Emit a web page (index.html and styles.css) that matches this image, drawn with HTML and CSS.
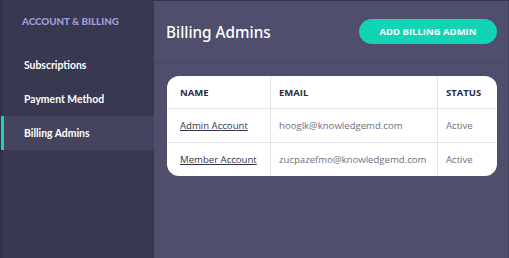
FILE: index.html
```html
<!DOCTYPE html>
<html lang="en">
<head>
  <meta charset="UTF-8" />
  <title>Billing Admins</title>
  <link rel="stylesheet" href="styles.css">
</head>
<body>

<div class="app">
  <aside class="sidebar">
    <div class="side-title">Account &amp; Billing</div>
    <nav class="side-nav">
      <a class="side-item" href="#">Subscriptions</a>
      <a class="side-item" href="#">Payment Method</a>
      <a class="side-item active" href="#">Billing Admins</a>
    </nav>
  </aside>

  <main class="main">
    <div class="page-head">
      <h1>Billing Admins</h1>
      <button class="add-btn">Add Billing Admin</button>
    </div>

    <div class="card">
      <div class="row head">
        <div class="cell">Name</div>
        <div class="cell">Email</div>
        <div class="cell">Status</div>
      </div>
      <div class="row">
        <div class="cell"><a href="#">Admin Account</a></div>
        <div class="cell">hooglk@knowledgemd.com</div>
        <div class="cell">Active</div>
      </div>
      <div class="row">
        <div class="cell"><a href="#">Member Account</a></div>
        <div class="cell">zucpazefmo@knowledgemd.com</div>
        <div class="cell">Active</div>
      </div>
    </div>
  </main>
</div>

</body>
</html>
```

FILE: styles.css
```css
body { margin: 0; font-family: "Open Sans", "Noto Sans", sans-serif; background: #4f4e6d; }
.app { display: flex; height: 258px; border-top: 1px solid #34334a; box-sizing: border-box; }

.sidebar { width: 152px; background: #383850; border-left: 2px solid #302f43; padding-top: 13px; }
.side-title { padding-left: 20px; font-family: Lato, sans-serif; font-size: 9.8px; font-weight: 900; text-transform: uppercase; color: #a19fd8; line-height: 14px; }
.side-nav { display: flex; flex-direction: column; margin-top: 20px; }
.side-item { display: block; height: 34px; line-height: 34px; padding-left: 20px; font-family: Lato, sans-serif; font-size: 10.4px; font-weight: 700; color: #fff; text-decoration: none; border-left: 3px solid transparent; margin-left: -1px; }
.side-item.active { background: #45445f; border-left-color: #14d4b4; }

.main { flex: 1; border-right: 1px solid #45445f; }
.page-head { height: 61px; border-bottom: 1px solid #46455f; display: flex; align-items: center; justify-content: space-between; padding: 0 11px 0 12px; }
.page-head h1 { margin: 0; font-family: "Noto Sans", sans-serif; font-size: 15.3px; font-weight: 500; color: #fff; }
.add-btn { width: 138px; height: 25px; border: none; border-radius: 13px; background: #10d4b4; color: #fff; font-family: inherit; font-size: 9.5px; font-weight: 700; text-transform: uppercase; margin-top: -1px; }

.card { margin: 13px 11px 0 13px; background: #fff; border-radius: 12px; overflow: hidden; }
.row { display: grid; grid-template-columns: 103px 167px 1fr; height: 33px; border-top: 1px solid #e3e3ee; font-size: 9.6px; color: #707080; }
.row.head { height: 32px; border-top: none; font-size: 9.5px; font-weight: 700; text-transform: uppercase; color: #2d2c44; }
.cell { display: flex; align-items: center; padding-left: 8px; white-space: nowrap; }
.cell + .cell { border-left: 1px solid #e3e3ee; }
.cell:first-child { padding-left: 13px; }
.cell a { color: #35344a; }
```
